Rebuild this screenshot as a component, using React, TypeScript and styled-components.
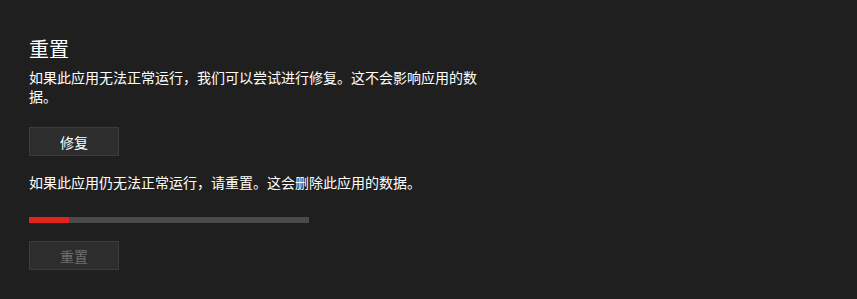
import React from "react";
import styled, { createGlobalStyle } from "styled-components";

const Global = createGlobalStyle`
  html, body { margin: 0; padding: 0; background: #1f1f1f; }
  body { font-family: "Noto Sans CJK SC", "Noto Sans", sans-serif; color: #ffffff; }
`;

const Page = styled.div`
  width: 857px;
  height: 299px;
  box-sizing: border-box;
  padding: 35px 0 0 29px;
  display: flex;
  flex-direction: column;
  align-items: flex-start;
`;

const Title = styled.h2`
  margin: 0;
  font-size: 20px;
  font-weight: 400;
  line-height: 28px;
`;

const Text = styled.p<{ $mt?: number }>`
  margin: ${(p) => p.$mt ?? 0}px 0 0;
  max-width: 456px;
  font-size: 14px;
  line-height: 19px;
`;

const Button = styled.button<{ $disabled?: boolean }>`
  margin-top: ${(p) => (p.$disabled ? 18 : 21)}px;
  width: 90px;
  height: 29px;
  box-sizing: border-box;
  background: #2d2d2d;
  border: 1px solid #3c3c3c;
  color: ${(p) => (p.$disabled ? "#6f6f6f" : "#ffffff")};
  font-family: inherit;
  font-size: 14px;
  padding: 0;
  display: flex;
  align-items: center;
  justify-content: center;
`;

const Track = styled.div`
  margin-top: 25px;
  width: 280px;
  height: 6px;
  background: #4b4b4b;
`;

const Fill = styled.div`
  height: 100%;
  background: #e3241c;
`;

export default function App() {
  const progress = 40 / 280;
  return (
    <>
      <Global />
      <Page>
        <Title>重置</Title>
        <Text $mt={5}>如果此应用无法正常运行，我们可以尝试进行修复。这不会影响应用的数据。</Text>
        <Button>修复</Button>
        <Text $mt={17}>如果此应用仍无法正常运行，请重置。这会删除此应用的数据。</Text>
        <Track>
          <Fill style={{ width: `${progress * 100}%` }} />
        </Track>
        <Button $disabled disabled>重置</Button>
      </Page>
    </>
  );
}
